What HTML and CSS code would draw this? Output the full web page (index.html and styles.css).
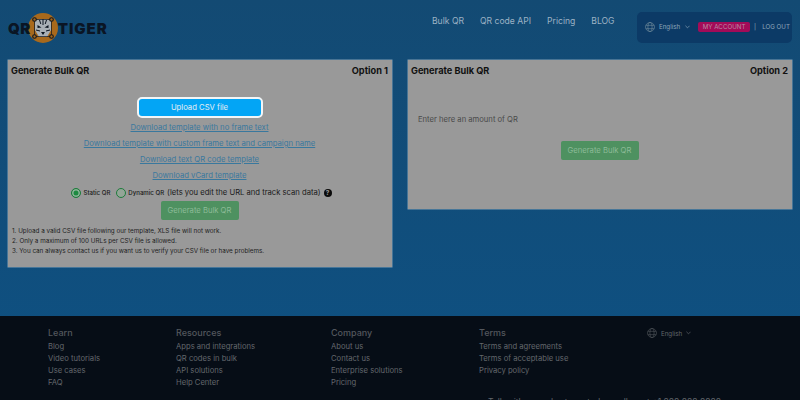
FILE: index.html
```html
<!DOCTYPE html>
<html lang="en">
<head>
  <meta charset="UTF-8">
  <title>QR TIGER - Generate Bulk QR</title>
  <link rel="stylesheet" href="styles.css">
</head>
<body>

  <header class="topbar">
    <a class="logo" href="#">
      <span class="logo-word">QR</span>
      <svg class="logo-mark" width="30" height="30" viewBox="0 0 30 30">
        <circle cx="15" cy="15" r="15" fill="#a8691c"/>
        <path d="M7 8 L11 6 L19 6 L23 8 L23 17 L19 24 L11 24 L7 17 Z" fill="#a9b0b6"/>
        <path d="M9.500 12 L13.500 14.500 L9.500 15 Z M20.500 12 L16.500 14.500 L20.500 15 Z M13 19 L17 19 L15 22 Z" fill="#0b1420"/>
        <path d="M15 6 L15 12 M11.500 7 L12.800 11 M18.500 7 L17.200 11 M8 17 L12 18 M22 17 L18 18" stroke="#0b1420" stroke-width="1" fill="none"/>
        <path d="M6.500 6.500 H23.500 V23.500 H6.500 Z" stroke="#0b1420" stroke-width="0.700" fill="none"/>
        <circle cx="6.500" cy="6.500" r="1.800" fill="#a8691c" stroke="#0b1420" stroke-width="1.100"/>
        <circle cx="23.500" cy="6.500" r="1.800" fill="#a8691c" stroke="#0b1420" stroke-width="1.100"/>
        <circle cx="6.500" cy="23.500" r="1.800" fill="#a8691c" stroke="#0b1420" stroke-width="1.100"/>
        <circle cx="23.500" cy="23.500" r="1.800" fill="#a8691c" stroke="#0b1420" stroke-width="1.100"/>
      </svg>
      <span class="logo-word logo-word-wide">TIGER</span>
    </a>
    <nav class="main-nav">
      <a href="#">Bulk QR</a>
      <a href="#">QR code API</a>
      <a href="#">Pricing</a>
      <a href="#">BLOG</a>
    </nav>
    <div class="account-box">
      <svg class="globe" width="10" height="10" viewBox="0 0 12 12">
        <circle cx="6" cy="6" r="5.400"/>
        <ellipse cx="6" cy="6" rx="2.500" ry="5.400"/>
        <path d="M1 4 H11 M1 8 H11"/>
      </svg>
      <span class="lang">English</span>
      <svg class="chevron" width="5" height="4" viewBox="0 0 6 4"><path d="M0.500 0.500 L3 3 L5.500 0.500"/></svg>
      <a class="my-account" href="#">MY ACCOUNT</a>
      <span class="bar">|</span>
      <a class="logout" href="#">LOG OUT</a>
    </div>
  </header>

  <main class="cards">
    <section class="card">
      <div class="card-head">
        <h2>Generate Bulk QR</h2>
        <strong>Option 1</strong>
      </div>
      <div class="card-center">
        <button class="upload-btn">Upload CSV file</button>
        <a class="dl-link" href="#">Download template with no frame text</a>
        <a class="dl-link" href="#">Download template with custom frame text and campaign name</a>
        <a class="dl-link" href="#">Download text QR code template</a>
        <a class="dl-link" href="#">Download vCard template</a>
        <div class="qr-type">
          <span class="radio radio-on"></span>
          <span class="radio-label">Static QR</span>
          <span class="radio"></span>
          <span class="radio-label">Dynamic QR</span>
          <span class="qr-note">(lets you edit the URL and track scan data)</span>
          <span class="help">?</span>
        </div>
        <button class="generate-btn">Generate Bulk QR</button>
      </div>
      <ol class="rules">
        <li>1. Upload a valid CSV file following our template, XLS file will not work.</li>
        <li>2. Only a maximum of 100 URLs per CSV file is allowed.</li>
        <li>3. You can always contact us if you want us to verify your CSV file or have problems.</li>
      </ol>
    </section>

    <section class="card card-short">
      <div class="card-head">
        <h2>Generate Bulk QR</h2>
        <strong>Option 2</strong>
      </div>
      <p class="amount-label">Enter here an amount of QR</p>
      <div class="card-center">
        <button class="generate-btn">Generate Bulk QR</button>
      </div>
    </section>
  </main>

  <footer class="footer">
    <div class="footer-cols">
      <div class="footer-col">
        <h3>Learn</h3>
        <a href="#">Blog</a>
        <a href="#">Video tutorials</a>
        <a href="#">Use cases</a>
        <a href="#">FAQ</a>
      </div>
      <div class="footer-col">
        <h3>Resources</h3>
        <a href="#">Apps and integrations</a>
        <a href="#">QR codes in bulk</a>
        <a href="#">API solutions</a>
        <a href="#">Help Center</a>
      </div>
      <div class="footer-col">
        <h3>Company</h3>
        <a href="#">About us</a>
        <a href="#">Contact us</a>
        <a href="#">Enterprise solutions</a>
        <a href="#">Pricing</a>
      </div>
      <div class="footer-col">
        <h3>Terms</h3>
        <a href="#">Terms and agreements</a>
        <a href="#">Terms of acceptable use</a>
        <a href="#">Privacy policy</a>
      </div>
      <div class="footer-lang">
        <svg class="globe" width="10" height="10" viewBox="0 0 12 12">
          <circle cx="6" cy="6" r="5.400"/>
          <ellipse cx="6" cy="6" rx="2.500" ry="5.400"/>
          <path d="M1 4 H11 M1 8 H11"/>
        </svg>
        <span>English</span>
        <svg class="chevron" width="5" height="4" viewBox="0 0 6 4"><path d="M0.500 0.500 L3 3 L5.500 0.500"/></svg>
      </div>
    </div>
    <p class="footer-sales">Talk with our sales team today, call us at +1 888 888 8888</p>
  </footer>

</body>
</html>
```

FILE: styles.css
```css
/* General page */
html, body {
  margin: 0;
  height: 400px;
  overflow: hidden;
}

body {
  display: flex;
  flex-direction: column;
  background: linear-gradient(180deg, #134a73 0%, #0e5183 100%);
  font-family: Inter, "Liberation Sans", sans-serif;
}

a {
  text-decoration: none;
}

/* Header */
.topbar {
  display: flex;
  align-items: flex-start;
  height: 60px;
  flex-shrink: 0;
}

.logo {
  display: flex;
  align-items: center;
  margin: 13px 0 0 8px;
  width: 424px;
  height: 30px;
}

.logo-word {
  z-index: 1;
  font-size: 15px;
  font-weight: 900;
  letter-spacing: 0.4px;
  color: #0a1524;
}

.logo-word-wide {
  letter-spacing: 1px;
}

.logo-mark {
  margin-left: -3px;
}

.main-nav {
  display: flex;
  gap: 16px;
  margin-top: 15px;
  font-size: 8.600px;
  line-height: 13px;
}

.main-nav a {
  color: #9db2c4;
}

.account-box {
  display: flex;
  align-items: center;
  width: 155px;
  height: 31px;
  box-sizing: border-box;
  margin: 12px 8px 0 auto;
  padding: 0 0 2px 8px;
  background: #0c3a66;
  border-radius: 5px;
  font-size: 6.200px;
  color: #8ea6ba;
  white-space: nowrap;
}

.globe {
  fill: none;
  stroke: #77909f;
  stroke-width: 0.700;
}

.chevron {
  fill: none;
  stroke: currentColor;
  stroke-width: 0.800;
}

.lang {
  margin-left: 4px;
}

.account-box .chevron {
  margin-left: 5px;
}

.my-account {
  width: 52px;
  margin-left: 8px;
  line-height: 10px;
  text-align: center;
  background: #a30b58;
  border-radius: 2px;
  color: #b98aa6;
}

.bar {
  margin-left: 4px;
}

.logout {
  margin-left: 6px;
  color: #8ea6ba;
}

/* Cards */
.cards {
  display: grid;
  grid-template-columns: 384px 384px;
  gap: 16px;
  align-items: start;
  height: 256px;
  flex-shrink: 0;
  padding: 0 8px;
  box-sizing: border-box;
}

.card {
  height: 207px;
  box-sizing: border-box;
  padding: 3px 4px 0 3px;
  background: #999999;
  box-shadow: 0 0 0 0.5px #7f9db3;
  color: #111111;
}

.card-short {
  height: 149px;
}

.card-head {
  display: flex;
  justify-content: space-between;
  align-items: center;
  height: 14px;
}

.card-head h2,
.card-head strong {
  margin: 0;
  font-size: 9.200px;
  font-weight: 700;
}

.card-center {
  display: flex;
  flex-direction: column;
  align-items: center;
}

.upload-btn {
  width: 126px;
  height: 21px;
  margin-top: 20px;
  padding: 0;
  background: #03a5f5;
  border: 2px solid #f2f5f7;
  border-radius: 5px;
  font: 7.700px Inter, "Liberation Sans", sans-serif;
  color: #e6eef3;
}

.dl-link {
  margin-top: 3.500px;
  font-size: 7.700px;
  line-height: 12.500px;
  color: #39789e;
  text-decoration: underline;
}

.upload-btn + .dl-link {
  margin-top: 4px;
}

.qr-type {
  display: flex;
  align-items: center;
  height: 14px;
  margin: 3px 0 0 4px;
  font-size: 7.650px;
  color: #1a1a1a;
}

.radio {
  width: 8px;
  height: 8px;
  border: 1px solid #1e7c3c;
  border-radius: 50%;
  background: #93a597;
}

.radio-on {
  background: #1e8a41;
  box-shadow: inset 0 0 0 1.500px #8fb59a;
}

.radio-label {
  margin: 0 6px 0 2px;
  font-size: 6.100px;
  font-weight: 500;
}

.qr-note {
  margin-left: -3px;
}

.help {
  display: flex;
  justify-content: center;
  align-items: center;
  width: 8px;
  height: 8px;
  margin-left: 3px;
  background: #0b0b0b;
  border-radius: 50%;
  font-size: 6.500px;
  font-weight: 700;
  color: #999999;
}

.generate-btn {
  width: 78px;
  height: 19px;
  margin-top: 1px;
  padding: 0;
  background: #4e9160;
  border: none;
  border-radius: 2px;
  font: 7.650px Inter, "Liberation Sans", sans-serif;
  color: #8dbb98;
}

.rules {
  list-style: none;
  margin: 6px 0 0;
  padding: 0 0 0 1px;
  font-size: 6.300px;
  line-height: 10px;
  color: #222222;
}

.amount-label {
  margin: 37px 0 0 7px;
  font-size: 7.650px;
  line-height: 12px;
  color: #4a4a4a;
}

.card-short .generate-btn {
  margin-top: 15px;
}

/* Footer */
.footer {
  flex: 1;
  background: #060d16;
  overflow: hidden;
}

.footer-cols {
  display: grid;
  grid-template-columns: 128px 155px 148px 168px auto;
  height: 69px;
  padding: 11px 0 0 48px;
}

.footer-col {
  display: flex;
  flex-direction: column;
}

.footer-col h3 {
  margin: 0 0 2px;
  font-size: 9px;
  line-height: 12px;
  font-weight: 500;
  color: #53575d;
}

.footer-col a {
  font-size: 7.650px;
  line-height: 12px;
  color: #63676c;
}

.footer-lang {
  display: flex;
  align-items: center;
  align-self: start;
  gap: 4px;
  height: 10px;
  margin-top: 1px;
  font-size: 6.200px;
  color: #63676c;
}

.footer-lang .globe {
  stroke: #55595e;
}

.footer-sales {
  margin: 0 0 0 488px;
  font-size: 8.500px;
  line-height: 12px;
  color: #63676c;
  white-space: nowrap;
}
```
